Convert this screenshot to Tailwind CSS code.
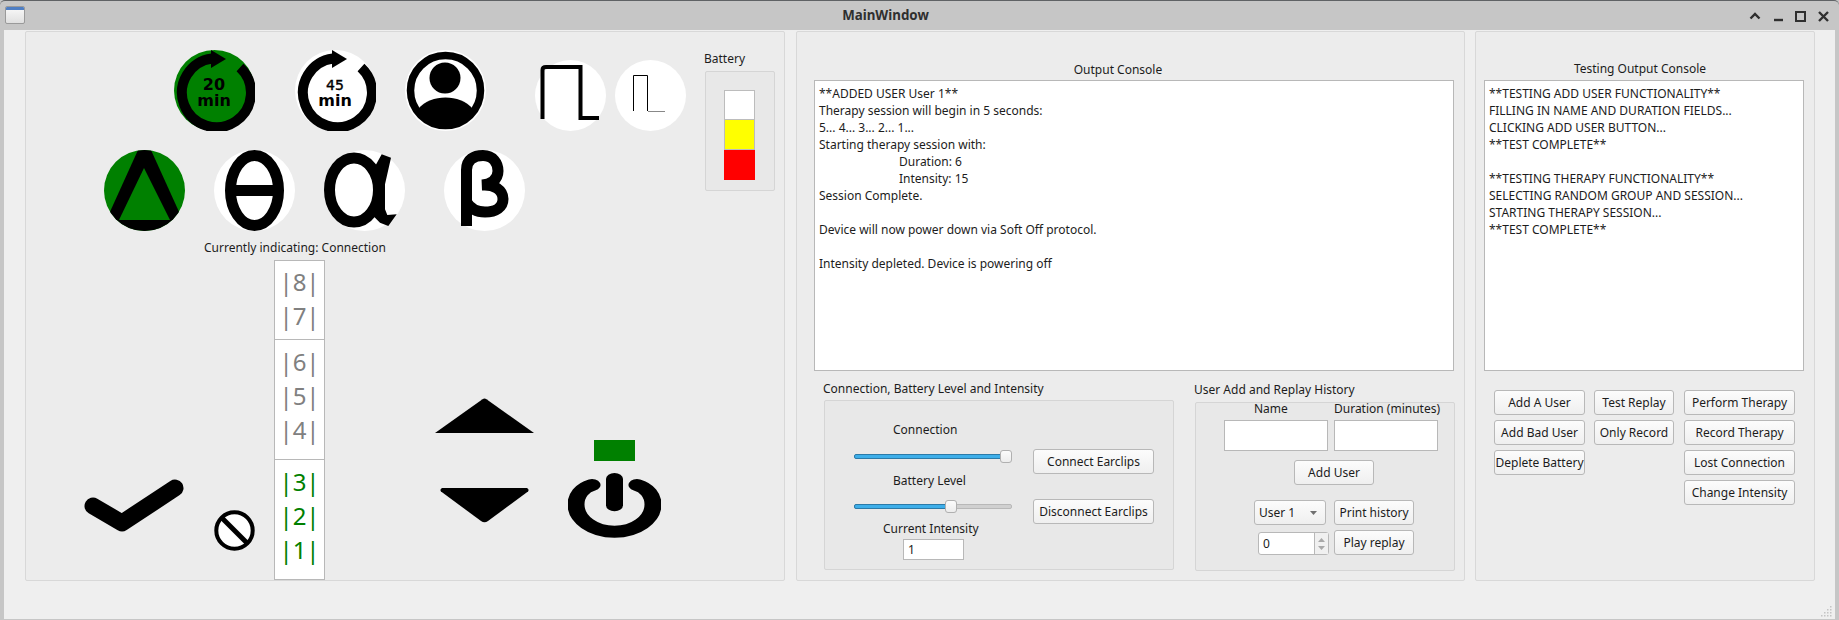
<!DOCTYPE html>
<html lang="en">
<head>
    <meta charset="UTF-8">
    <title>MainWindow</title>
    <script src="https://cdn.jsdelivr.net/npm/@tailwindcss/browser@4"></script>
</head>
<body class="bg-[#c6c6c6] overflow-hidden">
<div class="w-[1839px] h-[620px] relative font-['Noto_Sans',sans-serif] text-[12px] leading-[17px] text-[#1c1c1c] bg-[#c6c6c6] flex flex-col rounded-t-[5px] border-t border-[#5f6265]">
    <!-- Title bar -->
    <div class="h-[29px] shrink-0 relative flex items-center justify-center pr-[68px]">
        <div class="absolute left-[5px] top-[5px] w-[20px] h-[18px] rounded-[2px] border border-[#9a9a9a] overflow-hidden bg-linear-to-b from-[#fafafa] to-[#e0e0e0]">
            <div class="h-[3px] bg-[#4f7fc4]"></div>
        </div>
        <span class="font-bold text-[13.33px] text-[#2f2f2f]">MainWindow</span>
        <svg class="absolute left-[1748px] top-[8px]" width="82" height="14" viewBox="0 0 82 14">
            <path d="M2.5 9.5 L7 5 L11.5 9.5" fill="none" stroke="#2f2f2f" stroke-width="2.4"/>
            <path d="M26 11 H35" stroke="#2f2f2f" stroke-width="2.4"/>
            <rect x="48" y="3" width="9" height="9" fill="none" stroke="#2f2f2f" stroke-width="2"/>
            <path d="M71 3 L80 12 M80 3 L71 12" stroke="#2f2f2f" stroke-width="2.4"/>
        </svg>
    </div>

    <!-- Content -->
    <div class="flex-1 mx-[4px] mb-[1px] bg-[#efefef] pl-[21px] pt-[1px] flex items-start">

        <!-- Left panel: device -->
        <div class="w-[760px] h-[550px] shrink-0 bg-[#ececec] border border-[#d8d8d8] rounded-[2px]">
            <div class="flex">
                <div class="w-[678px] shrink-0">
                    <div class="flex items-start pt-[18px] pl-[148px]">
                        <svg width="81" height="81" viewBox="0 0 81 81">
                            <circle cx="40.5" cy="40.5" r="40.5" fill="#008000"/>
                            <path d="M66 17.5 A34.5 34.5 0 1 1 38 8.5" fill="none" stroke="#000" stroke-width="10"/>
                            <polygon points="37,0 52,9 37,18" fill="#000"/>
                            <text x="40" y="40" text-anchor="middle" font-family="DejaVu Sans" font-weight="700" font-size="16">20</text>
                            <text x="40" y="56" text-anchor="middle" font-family="DejaVu Sans" font-weight="700" font-size="16">min</text>
                        </svg>
                        <svg class="ml-[40px]" width="81" height="81" viewBox="0 0 81 81">
                            <circle cx="40.5" cy="40.5" r="40.5" fill="#fff"/>
                            <path d="M66 17.5 A34.5 34.5 0 1 1 38 8.5" fill="none" stroke="#000" stroke-width="10"/>
                            <polygon points="37,0 52,9 37,18" fill="#000"/>
                            <text x="40" y="40" text-anchor="middle" font-family="DejaVu Sans" font-size="14" stroke="#000" stroke-width="0.4">45</text>
                            <text x="40" y="56" text-anchor="middle" font-family="DejaVu Sans" font-weight="700" font-size="16">min</text>
                        </svg>
                        <svg class="ml-[29px]" width="81" height="81" viewBox="0 0 81 81">
                            <circle cx="40.5" cy="40.5" r="40.5" fill="#fff"/>
                            <circle cx="40.5" cy="40.5" r="35" fill="none" stroke="#000" stroke-width="7.5"/>
                            <circle cx="40" cy="28" r="15.5" fill="#000"/>
                            <path d="M13 59 C20 51 30 47.5 40.5 47.5 C51 47.5 61 51 68 59 C62 69 52 75 40.5 75 C29 75 19 69 13 59 Z" fill="#000"/>
                        </svg>
                        <svg class="ml-[49px] mt-[10px]" width="71" height="71" viewBox="0 0 71 71">
                            <circle cx="35.5" cy="35.5" r="35.5" fill="#fff"/>
                            <path d="M7.5 59 V10 Q7.5 7 11 7 H45.5 V58 H64" fill="none" stroke="#000" stroke-width="4"/>
                        </svg>
                        <svg class="ml-[9px] mt-[10px]" width="71" height="71" viewBox="0 0 71 71">
                            <circle cx="35.5" cy="35.5" r="35.5" fill="#fff"/>
                            <path d="M18.5 51 V15.5 H32.5 V51" fill="none" stroke="#000" stroke-width="1"/>
                            <path d="M33 51.5 H50" fill="none" stroke="#888" stroke-width="1"/>
                        </svg>
                    </div>
                    <div class="flex items-start mt-[19px] pl-[78px]">
                        <svg width="81" height="81" viewBox="0 0 81 81">
                            <clipPath id="deltaClip"><circle cx="40.5" cy="40.5" r="40.5"/></clipPath>
                            <circle cx="40.5" cy="40.5" r="40.5" fill="#008000"/>
                            <polygon clip-path="url(#deltaClip)" points="34,0 47,0 90,95 -9,95" fill="#000"/>
                            <polygon points="40,18 15,70 66,70" fill="#008000"/>
                        </svg>
                        <svg class="ml-[29px]" width="81" height="81" viewBox="0 0 81 81">
                            <circle cx="40.5" cy="40.5" r="40.5" fill="#fff"/>
                            <ellipse cx="40.5" cy="40.5" rx="24" ry="35" fill="none" stroke="#000" stroke-width="11"/>
                            <rect x="14" y="35" width="54" height="11" fill="#000"/>
                        </svg>
                        <svg class="ml-[29px]" width="81" height="81" viewBox="0 0 81 81">
                            <circle cx="40.5" cy="40.5" r="40.5" fill="#fff"/>
                            <ellipse cx="30" cy="40" rx="24.5" ry="32" fill="none" stroke="#000" stroke-width="11"/>
                            <polygon points="57.7,4.3 67,7.7 61,34.3 61,59.3 63.3,65 72.7,64.3 64.3,76 56,72.7 49.3,66 49,20" fill="#000"/>
                        </svg>
                        <svg class="ml-[39px]" width="81" height="81" viewBox="0 0 81 81">
                            <circle cx="40.5" cy="40.5" r="40.5" fill="#fff"/>
                            <path d="M22.5 76 V20 C22.5 9 30 5.5 39 5.5 C49 5.5 54 13 54 21 C54 30 46 35 38 35 C50 34 59 40 59 49 C59 57 52 62 41 62 C32 62 26 58 22.5 52" fill="none" stroke="#000" stroke-width="11"/>
                        </svg>
                    </div>
                </div>
                <div class="pt-[18px] whitespace-nowrap">
                    <div>Battery</div>
                    <div class="mt-[4px] ml-[1px] w-[70px] h-[120px] bg-[#e8e8e8] border border-[#d5d5d5] rounded-[2px] pt-[18px] pl-[18px]">
                        <div class="w-[31px] h-[30px] bg-white border border-[#bcbcbc]"></div>
                        <div class="w-[31px] h-[30px] bg-[#ffff00] border border-[#bcbcbc] border-t-0"></div>
                        <div class="w-[31px] h-[30px] bg-[#ff0000]"></div>
                    </div>
                </div>
            </div>

            <div class="mt-[8px] pl-[178px] whitespace-nowrap">Currently indicating: Connection</div>

            <div class="mt-[4px] h-[320px] flex items-start">
                <svg class="ml-[58px] mt-[219px]" width="101" height="53" viewBox="0 0 101 53">
                    <path d="M9 27 L38 44 L91 9" fill="none" stroke="#000" stroke-width="17" stroke-linecap="round" stroke-linejoin="round"/>
                </svg>
                <svg class="ml-[29px] mt-[250px]" width="41" height="41" viewBox="0 0 41 41">
                    <circle cx="20.5" cy="20.5" r="18.2" fill="#fff" stroke="#000" stroke-width="4"/>
                    <path d="M8 8 L33 33" stroke="#000" stroke-width="5"/>
                </svg>
                <!-- Intensity scale -->
                <div class="ml-[19px] w-[51px] h-[320px] shrink-0 bg-white border border-[#b8b8b8] text-[24px] leading-[34px] text-center">
                    <div class="h-[79px] pt-[4px] text-[#808080] border-b border-[#b8b8b8]">
                        <div>|8|</div>
                        <div>|7|</div>
                    </div>
                    <div class="h-[120px] pt-[5px] text-[#808080] border-b border-[#b8b8b8]">
                        <div>|6|</div>
                        <div>|5|</div>
                        <div>|4|</div>
                    </div>
                    <div class="h-[119px] pt-[5px] text-[#008000]">
                        <div>|3|</div>
                        <div>|2|</div>
                        <div>|1|</div>
                    </div>
                </div>
                <div class="ml-[110px] w-[99px] shrink-0 pt-[138px]">
                    <svg width="99" height="35" viewBox="0 0 99 35"><path d="M0 35 L47.5 1.2 Q49.5 0 51.5 1.2 L99 35 Z" fill="#000"/></svg>
                    <svg class="mt-[55px] ml-[5px]" width="89" height="35" viewBox="0 0 89 35"><path d="M2 0 H87 Q89.5 1.5 88 3.5 L48 33 Q44.5 35.5 41 33 L1 3.5 Q-0.5 1.5 2 0 Z" fill="#000"/></svg>
                </div>
                <div class="ml-[34px] w-[93px] shrink-0 pt-[180px]">
                    <div class="ml-[26px] w-[41px] h-[21px] bg-[#008000]"></div>
                    <svg class="mt-[12px]" width="93" height="65" viewBox="0 0 93 65">
                        <g transform="scale(1 0.7)">
                            <path d="M24 17 C14 21 8 32 8 45 A38.5 39 0 0 0 85 45 C85 32 79 21 69 17" fill="none" stroke="#000" stroke-width="17" stroke-linecap="round"/>
                            <path d="M46.5 8.5 V46" stroke="#000" stroke-width="17" stroke-linecap="round"/>
                        </g>
                    </svg>
                </div>
            </div>
        </div>

        <!-- Middle panel: output console and controls -->
        <div class="ml-[11px] w-[669px] h-[550px] shrink-0 bg-[#ececec] border border-[#d8d8d8] rounded-[2px]">
            <div class="pt-[29px] pl-[17px]">
                <div class="w-[608px] text-center">Output Console</div>
                <div class="mt-[2px] w-[640px] h-[291px] bg-white border border-[#b8b8b8] pt-[4px] pl-[4px] whitespace-nowrap">
                    <div>**ADDED USER User 1**</div>
                    <div>Therapy session will begin in 5 seconds:</div>
                    <div>5... 4... 3... 2... 1...</div>
                    <div>Starting therapy session with:</div>
                    <div class="pl-[80px]">Duration: 6</div>
                    <div class="pl-[80px]">Intensity: 15</div>
                    <div>Session Complete.</div>
                    <div class="h-[17px]"></div>
                    <div>Device will now power down via Soft Off protocol.</div>
                    <div class="h-[17px]"></div>
                    <div>Intensity depleted. Device is powering off</div>
                </div>
            </div>
            <div class="flex items-start mt-[9px]">
                <!-- Connection group -->
                <div class="ml-[27px] shrink-0">
                    <div class="-ml-[1px] whitespace-nowrap">Connection, Battery Level and Intensity</div>
                    <div class="mt-[3px] w-[350px] h-[170px] bg-[#e8e8e8] border border-[#d5d5d5] rounded-[2px] flex">
                        <div class="ml-[29px] w-[158px] shrink-0 pt-[20px]">
                            <div class="ml-[39px]">Connection</div>
                            <div class="mt-[12px] relative h-[13px]">
                                <div class="absolute left-0 right-0 top-[4px] h-[5px] rounded-[2px] bg-[#3daee9] border border-[#2b7aa8]"></div>
                                <div class="absolute right-0 top-0 w-[12px] h-[13px] rounded-[3px] bg-linear-to-b from-[#fcfcfc] to-[#ececec] border border-[#b0b0b0]"></div>
                            </div>
                            <div class="mt-[9px] ml-[39px]">Battery Level</div>
                            <div class="mt-[11px] relative h-[13px]">
                                <div class="absolute left-0 right-0 top-[4px] h-[5px] rounded-[2px] bg-[#d0d0d0] border border-[#b8b8b8]"></div>
                                <div class="absolute left-0 w-[95px] top-[4px] h-[5px] rounded-l-[2px] bg-[#3daee9] border border-[#2b7aa8]"></div>
                                <div class="absolute left-[91px] top-0 w-[12px] h-[13px] rounded-[3px] bg-linear-to-b from-[#fcfcfc] to-[#ececec] border border-[#b0b0b0]"></div>
                            </div>
                            <div class="mt-[7px] ml-[29px] whitespace-nowrap">Current Intensity</div>
                            <div class="mt-[2px] ml-[49px] w-[61px] h-[21px] bg-white border border-[#b8b8b8] pl-[4px] leading-[19px]">1</div>
                        </div>
                        <div class="ml-[21px] w-[121px] shrink-0 pt-[48px] text-center whitespace-nowrap">
                            <div class="h-[25px] leading-[23px] rounded-[3px] border border-[#b8b8b8] bg-linear-to-b from-[#fcfcfc] to-[#efefef]">Connect Earclips</div>
                            <div class="mt-[25px] h-[25px] leading-[23px] rounded-[3px] border border-[#b8b8b8] bg-linear-to-b from-[#fcfcfc] to-[#efefef]">Disconnect Earclips</div>
                        </div>
                    </div>
                </div>
                <!-- User group -->
                <div class="ml-[21px] shrink-0 pt-[1px]">
                    <div class="-ml-[1px] whitespace-nowrap">User Add and Replay History</div>
                    <div class="mt-[4px] w-[260px] h-[169px] bg-[#e8e8e8] border border-[#d5d5d5] rounded-[2px]">
                        <div class="flex -mt-[3px]">
                            <div class="ml-[28px] w-[104px] shrink-0">
                                <div class="pl-[30px]">Name</div>
                                <div class="mt-[3px] h-[31px] bg-white border border-[#b8b8b8]"></div>
                            </div>
                            <div class="ml-[6px] w-[104px] shrink-0">
                                <div class="whitespace-nowrap">Duration (minutes)</div>
                                <div class="mt-[3px] h-[31px] bg-white border border-[#b8b8b8]"></div>
                            </div>
                        </div>
                        <div class="mt-[9px] ml-[98px] w-[80px] h-[25px] leading-[23px] text-center rounded-[3px] border border-[#b8b8b8] bg-linear-to-b from-[#fcfcfc] to-[#efefef]">Add User</div>
                        <div class="mt-[15px] flex">
                            <div class="ml-[58px] w-[72px] h-[25px] shrink-0 leading-[23px] pl-[4px] rounded-[3px] border border-[#b8b8b8] bg-linear-to-b from-[#fcfcfc] to-[#efefef] flex items-center justify-between pr-[8px]">
                                <span>User 1</span>
                                <svg width="7" height="4" viewBox="0 0 7 4"><polygon points="0,0 7,0 3.5,4" fill="#707070"/></svg>
                            </div>
                            <div class="ml-[8px] w-[80px] h-[25px] shrink-0 leading-[23px] text-center rounded-[3px] border border-[#b8b8b8] bg-linear-to-b from-[#fcfcfc] to-[#efefef]">Print history</div>
                        </div>
                        <div class="mt-[5px] flex items-start">
                            <div class="ml-[62px] mt-[2px] w-[71px] h-[23px] shrink-0 flex bg-white rounded-[3px] border border-[#b8b8b8]">
                                <div class="flex-1 pl-[4px] leading-[21px]">0</div>
                                <div class="w-[14px] border-l border-[#b8b8b8] bg-[#f0f0f0] flex flex-col items-center justify-center gap-[4px]">
                                    <svg width="7" height="4" viewBox="0 0 7 4"><polygon points="0,4 7,4 3.5,0" fill="#a8a8a8"/></svg>
                                    <svg width="7" height="4" viewBox="0 0 7 4"><polygon points="0,0 7,0 3.5,4" fill="#a8a8a8"/></svg>
                                </div>
                            </div>
                            <div class="ml-[5px] w-[80px] h-[25px] shrink-0 leading-[23px] text-center rounded-[3px] border border-[#b8b8b8] bg-linear-to-b from-[#fcfcfc] to-[#efefef]">Play replay</div>
                        </div>
                    </div>
                </div>
            </div>
        </div>

        <!-- Right panel: testing console -->
        <div class="ml-[10px] w-[340px] h-[550px] shrink-0 bg-[#ececec] border border-[#d8d8d8] rounded-[2px]">
            <div class="pt-[28px] pl-[8px]">
                <div class="w-[312px] text-center">Testing Output Console</div>
                <div class="mt-[3px] w-[320px] h-[291px] bg-white border border-[#b8b8b8] pt-[4px] pl-[4px] whitespace-nowrap">
                    <div>**TESTING ADD USER FUNCTIONALITY**</div>
                    <div>FILLING IN NAME AND DURATION FIELDS...</div>
                    <div>CLICKING ADD USER BUTTON...</div>
                    <div>**TEST COMPLETE**</div>
                    <div class="h-[17px]"></div>
                    <div>**TESTING THERAPY FUNCTIONALITY**</div>
                    <div>SELECTING RANDOM GROUP AND SESSION...</div>
                    <div>STARTING THERAPY SESSION...</div>
                    <div>**TEST COMPLETE**</div>
                </div>
            </div>
            <div class="mt-[19px] pl-[18px] flex items-start text-center whitespace-nowrap">
                <div class="w-[91px] shrink-0 flex flex-col gap-[5px]">
                    <div class="h-[25px] leading-[23px] rounded-[3px] border border-[#b8b8b8] bg-linear-to-b from-[#fcfcfc] to-[#efefef]">Add A User</div>
                    <div class="h-[25px] leading-[23px] rounded-[3px] border border-[#b8b8b8] bg-linear-to-b from-[#fcfcfc] to-[#efefef]">Add Bad User</div>
                    <div class="h-[25px] leading-[23px] rounded-[3px] border border-[#b8b8b8] bg-linear-to-b from-[#fcfcfc] to-[#efefef]">Deplete Battery</div>
                </div>
                <div class="ml-[9px] w-[80px] shrink-0 flex flex-col gap-[5px]">
                    <div class="h-[25px] leading-[23px] rounded-[3px] border border-[#b8b8b8] bg-linear-to-b from-[#fcfcfc] to-[#efefef]">Test Replay</div>
                    <div class="h-[25px] leading-[23px] rounded-[3px] border border-[#b8b8b8] bg-linear-to-b from-[#fcfcfc] to-[#efefef]">Only Record</div>
                </div>
                <div class="ml-[10px] w-[111px] shrink-0 flex flex-col gap-[5px]">
                    <div class="h-[25px] leading-[23px] rounded-[3px] border border-[#b8b8b8] bg-linear-to-b from-[#fcfcfc] to-[#efefef]">Perform Therapy</div>
                    <div class="h-[25px] leading-[23px] rounded-[3px] border border-[#b8b8b8] bg-linear-to-b from-[#fcfcfc] to-[#efefef]">Record Therapy</div>
                    <div class="h-[25px] leading-[23px] rounded-[3px] border border-[#b8b8b8] bg-linear-to-b from-[#fcfcfc] to-[#efefef]">Lost Connection</div>
                    <div class="h-[25px] leading-[23px] rounded-[3px] border border-[#b8b8b8] bg-linear-to-b from-[#fcfcfc] to-[#efefef]">Change Intensity</div>
                </div>
            </div>
        </div>
    </div>

    <!-- Size grip -->
    <svg class="absolute right-[6px] bottom-[2px]" width="12" height="12" viewBox="0 0 12 12" fill="#c4c4c4">
        <rect x="9" y="0" width="1.5" height="1.5"/>
        <rect x="6" y="3" width="1.5" height="1.5"/><rect x="9" y="3" width="1.5" height="1.5"/>
        <rect x="3" y="6" width="1.5" height="1.5"/><rect x="6" y="6" width="1.5" height="1.5"/><rect x="9" y="6" width="1.5" height="1.5"/>
        <rect x="0" y="9" width="1.5" height="1.5"/><rect x="3" y="9" width="1.5" height="1.5"/><rect x="6" y="9" width="1.5" height="1.5"/><rect x="9" y="9" width="1.5" height="1.5"/>
    </svg>
</div>
</body>
</html>
